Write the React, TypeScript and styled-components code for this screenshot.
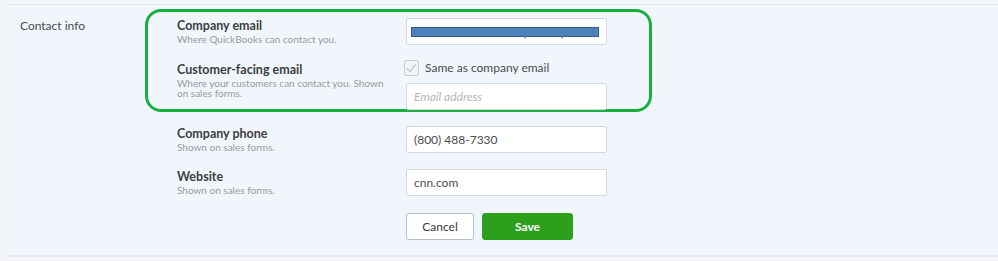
import React from "react";
import styled, { createGlobalStyle } from "styled-components";

const GlobalStyle = createGlobalStyle`
  html, body {
    margin: 0;
    padding: 0;
    background: #f4f5f8;
    font-family: Lato, "Open Sans", sans-serif;
    color: #393a3d;
  }
  * { box-sizing: border-box; }
`;

const Page = styled.div`
  padding: 4px 0 0 8px;
  height: 261px;
`;

const Panel = styled.section`
  display: flex;
  height: 253px;
  background: #f1f6fd;
  border-top: 1px solid #e6e9ee;
  border-bottom: 2px solid #e3e6eb;
`;

const SectionTitle = styled.div`
  width: 137px;
  padding: 13px 0 0 12px;
  font-size: 12px;
  line-height: 16px;
  color: #4a4b4e;
`;

const FormColumn = styled.div`
  display: flex;
  flex-direction: column;
`;

const Highlight = styled.div`
  margin-top: 4px;
  width: 507px;
  height: 103px;
  border: 3px solid #1aae41;
  border-radius: 16px;
  padding: 6px 0 0 29px;
  display: flex;
  flex-direction: column;
  gap: 15px;
`;

const Row = styled.div<{ $indent?: boolean; $top?: number }>`
  display: grid;
  grid-template-columns: 229px 201px;
  padding-left: ${(p) => (p.$indent ? "32px" : "0")};
  margin-top: ${(p) => p.$top ?? 0}px;
`;

const LabelBlock = styled.div<{ $offset?: number }>`
  padding-top: ${(p) => (p.$offset ?? 0) + 1}px;
`;

const Label = styled.div`
  font-size: 12.5px;
  line-height: 14px;
  font-weight: 700;
  color: #3d3e41;
`;

const Hint = styled.div`
  margin-top: 1px;
  font-size: 10px;
  line-height: 10px;
  color: #989a9e;
  width: 215px;
`;

const Control = styled.div`
  display: flex;
  flex-direction: column;
  gap: 7px;
`;

const TextInput = styled.input`
  width: 201px;
  height: 27px;
  margin: 0;
  padding: 0 7px;
  border: 1px solid #d4d7dc;
  border-radius: 2px;
  background: #fff;
  font-family: inherit;
  font-size: 12px;
  color: #4a4b4e;
  outline: none;

  &::placeholder {
    color: #b3b5b9;
    font-style: italic;
  }
`;

const RedactedField = styled.div`
  width: 201px;
  height: 27px;
  border: 1px solid #d4d7dc;
  border-radius: 2px;
  background: #fff;
  padding: 8px 0 0 4px;

  svg { display: block; }
`;

const CheckRow = styled.label`
  display: flex;
  align-items: center;
  gap: 6px;
  height: 16px;
  margin-left: -2px;
  font-size: 12px;
  line-height: 16px;
  color: #4a4b4e;
`;

const CheckBox = styled.span`
  width: 15px;
  height: 16px;
  border: 1px solid #c9ccd1;
  border-radius: 2px;
  background: #f3f4f6;
  display: flex;
  align-items: center;
  justify-content: center;
`;

const Actions = styled.div`
  display: flex;
  gap: 8px;
  margin-top: 17px;
  padding-left: 261px;
`;

const Button = styled.button<{ $primary?: boolean }>`
  height: 27px;
  width: ${(p) => (p.$primary ? "91px" : "68px")};
  margin: 0;
  padding: 0;
  border-radius: 3px;
  font-family: inherit;
  font-size: 12px;
  font-weight: ${(p) => (p.$primary ? 700 : 400)};
  border: 1px solid ${(p) => (p.$primary ? "#2ca01c" : "#b8bcc3")};
  background: ${(p) => (p.$primary ? "#2ca01c" : "#fff")};
  color: ${(p) => (p.$primary ? "#fff" : "#393a3d")};
  cursor: pointer;
`;

export default function App() {
  return (
    <>
      <GlobalStyle />
      <Page>
        <Panel>
          <SectionTitle>Contact info</SectionTitle>
          <FormColumn>
            <Highlight>
              <Row>
                <LabelBlock>
                  <Label>Company email</Label>
                  <Hint>Where QuickBooks can contact you.</Hint>
                </LabelBlock>
                <RedactedField>
                  <svg width="190" height="12" viewBox="0 0 190 12">
                    <rect x="0.5" y="0.5" width="187" height="9" fill="#4f81bd" stroke="#385d8a" />
                    <circle cx="114" cy="10.5" r="1" fill="#8a8d92" />
                    <circle cx="151" cy="10.5" r="1" fill="#8a8d92" />
                  </svg>
                </RedactedField>
              </Row>
              <Row>
                <LabelBlock $offset={2}>
                  <Label>Customer-facing email</Label>
                  <Hint>Where your customers can contact you. Shown on sales forms.</Hint>
                </LabelBlock>
                <Control>
                  <CheckRow>
                    <CheckBox>
                      <svg width="11" height="10" viewBox="0 0 11 10">
                        <path d="M1 5.5 L4 8.5 L10 1" fill="none" stroke="#c8cbcf" strokeWidth="1.6" />
                      </svg>
                    </CheckBox>
                    Same as company email
                  </CheckRow>
                  <TextInput placeholder="Email address" readOnly />
                </Control>
              </Row>
            </Highlight>
            <Row $indent $top={14}>
              <LabelBlock>
                <Label>Company phone</Label>
                <Hint>Shown on sales forms.</Hint>
              </LabelBlock>
              <TextInput defaultValue="(800) 488-7330" />
            </Row>
            <Row $indent $top={16}>
              <LabelBlock>
                <Label>Website</Label>
                <Hint>Shown on sales forms.</Hint>
              </LabelBlock>
              <TextInput defaultValue="cnn.com" />
            </Row>
            <Actions>
              <Button>Cancel</Button>
              <Button $primary>Save</Button>
            </Actions>
          </FormColumn>
        </Panel>
      </Page>
    </>
  );
}
